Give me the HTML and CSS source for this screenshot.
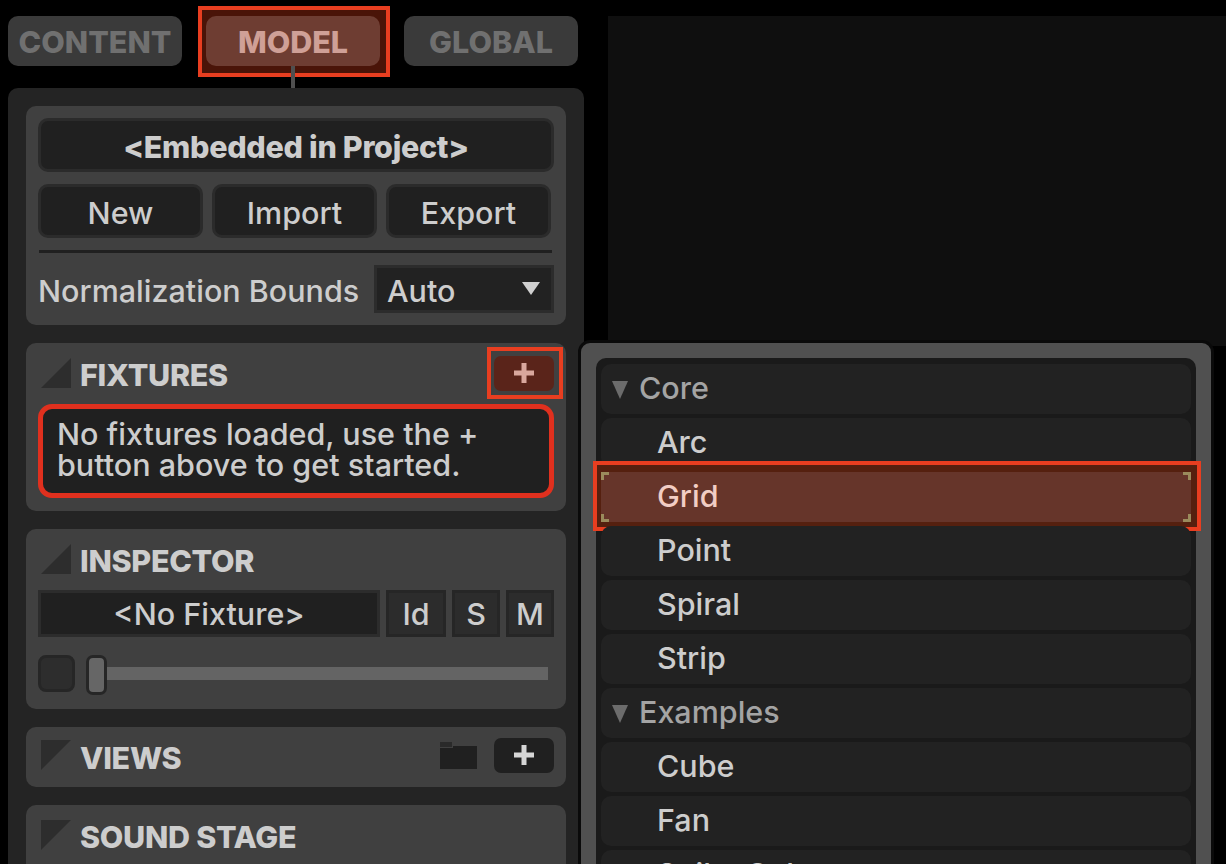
FILE: index.html
```html
<!DOCTYPE html>
<html lang="en">
<head>
<meta charset="utf-8">
<title>Model</title>
<link rel="stylesheet" href="styles.css">
</head>
<body>
<svg class="defs" width="0" height="0"><symbol id="cross" viewBox="0 0 22 22"><path d="M8.5 1h5v7.500H21v5h-7.500V21h-5v-7.500H1v-5h7.500Z"/></symbol></svg>
<div class="app">
  <aside class="side">
    <nav class="tabs">
      <div class="tab">CONTENT</div>
      <div class="tab-wrap">
        <span class="mark mark-tab"></span>
        <span class="stem"></span>
        <div class="tab tab-on">MODEL</div>
      </div>
      <div class="tab">GLOBAL</div>
    </nav>
    <div class="panel">
      <section class="card card-top">
        <div class="field field-bold">&lt;Embedded in Project&gt;</div>
        <div class="btn-row">
          <div class="btn">New</div>
          <div class="btn">Import</div>
          <div class="btn">Export</div>
        </div>
        <div class="rule"></div>
        <div class="norm">
          <span>Normalization Bounds</span>
          <div class="select"><span>Auto</span><i class="caret"></i></div>
        </div>
      </section>

      <section class="card card-fix">
        <header class="head">
          <svg class="tri" viewBox="0 0 30 30"><path d="M0 30 30 0V30Z"/></svg>
          <h2>FIXTURES</h2>
          <div class="plus plus-on"><svg class="cross"><use href="#cross"/></svg><span class="mark mark-plus"></span></div>
        </header>
        <div class="msg">No fixtures loaded, use the +<br>button above to get started.</div>
      </section>

      <section class="card card-insp">
        <header class="head">
          <svg class="tri" viewBox="0 0 30 30"><path d="M0 30 30 0V30Z"/></svg>
          <h2>INSPECTOR</h2>
        </header>
        <div class="insp-row">
          <div class="sq sq-name">&lt;No Fixture&gt;</div>
          <div class="sq sq-id">Id</div>
          <div class="sq sq-s">S</div>
          <div class="sq sq-m">M</div>
        </div>
        <div class="slider-row">
          <div class="check"></div>
          <div class="handle"></div>
          <div class="track"></div>
        </div>
      </section>

      <section class="card card-views">
        <header class="head">
          <svg class="tri" viewBox="0 0 30 30"><path d="M0 0H30L0 30Z"/></svg>
          <h2>VIEWS</h2>
          <svg class="folder" viewBox="0 0 37 27"><path class="folder-tab" d="M0 0H12V5H0Z"/><path d="M0 6H13V4H37V27H0Z"/></svg>
          <div class="plus"><svg class="cross"><use href="#cross"/></svg></div>
        </header>
      </section>

      <section class="card card-sound">
        <header class="head">
          <svg class="tri" viewBox="0 0 30 30"><path d="M0 0H30L0 30Z"/></svg>
          <h2>SOUND STAGE</h2>
        </header>
      </section>
    </div>
  </aside>
  <main class="stage"></main>
</div>

<div class="menu">
  <div class="list">
    <div class="item group"><i class="arrow"></i>Core</div>
    <div class="item">Arc</div>
    <div class="item-wrap">
      <span class="mark mark-grid"></span>
      <div class="item item-on">Grid<b class="cn tl"></b><b class="cn tr"></b><b class="cn bl"></b><b class="cn br"></b></div>
    </div>
    <div class="item">Point</div>
    <div class="item">Spiral</div>
    <div class="item">Strip</div>
    <div class="item group"><i class="arrow"></i>Examples</div>
    <div class="item">Cube</div>
    <div class="item">Fan</div>
    <div class="item">Spike Cube</div>
  </div>
</div>
</body>
</html>
```
FILE: styles.css
```css
* { box-sizing: border-box; }
html, body { margin: 0; height: 864px; overflow: hidden; background: #000; }
body { font-family: Inter, "Liberation Sans", sans-serif; font-size: 30.5px; font-weight: 500; color: #cdcdcd; position: relative; }
.defs { position: absolute; }

.app { display: flex; height: 864px; overflow: hidden; }
.side { width: 584px; margin-left: 8px; flex: none; padding-top: 16px; }
.stage { margin: 16px 0 0 16px; flex: 1; background: #0f0f0f; height: 330px; }

.tabs { display: flex; width: 570px; justify-content: space-between; height: 72px; }
.tab {
  width: 174px; height: 50px; border-radius: 10px; background: #3a3a3a; color: #707070;
  font-size: 30.5px; font-weight: 800; line-height: 51px; text-align: center; position: relative;
}
.tab-wrap { position: relative; width: 174px; height: 50px; }
.tab-on { background: #6e3d32; color: #cfa097; }

.mark { position: absolute; border: 4px solid #e83e20; pointer-events: none; }
.mark-tab { left: -8px; top: -10px; width: 192px; height: 71px; background: #4a1408; }
.stem { position: absolute; left: 85px; top: 50px; width: 4px; height: 22px; background: #4f4f4f; }

.panel {
  width: 576px; height: 900px; background: #242424; border-radius: 10px 10px 0 0;
  padding: 18px; display: flex; flex-direction: column; gap: 18px;
}
.card { background: #404040; border-radius: 10px; flex: none; }
.card-top { height: 219px; padding: 12px; }
.card-fix { height: 168px; padding: 15px 12px 0; }
.card-insp { height: 180px; padding: 15px 12px 0; }
.card-views { height: 60px; padding: 13px 12px 0; }
.card-sound { height: 80px; padding: 15px 12px 0; }

.field, .btn {
  background: #202020; border: 3px solid #2b2b2b; border-radius: 10px; display: flex;
  align-items: center; justify-content: center; padding-top: 2px;
}
.field { height: 54px; }
.field-bold { font-weight: 800; letter-spacing: -.3px; }
.btn-row { display: flex; gap: 9px; margin-top: 12px; }
.btn { width: 165px; height: 54px; }
.rule { height: 3px; background: #202020; margin: 12px 2px 12px 1px; }
.norm { display: flex; justify-content: space-between; align-items: center; height: 48px; padding-top: 2px; }
.select {
  width: 180px; height: 48px; margin-top: -2px; background: #222; border: 3px solid #2c2c2c; display: flex;
  align-items: center; justify-content: space-between; padding: 2px 11px 0 10px;
}
.caret { width: 0; height: 0; border-left: 9px solid transparent; border-right: 9px solid transparent; border-top: 13px solid #d0d0d0; margin-bottom: 4px; }

.head { display: flex; align-items: center; height: 30px; padding-left: 3px; position: relative; }
.head h2 { margin: 0 0 0 9px; padding-top: 4px; font-size: 30.5px; font-weight: 800; line-height: 30px; letter-spacing: -.3px; flex: 1; }
.card-views .head h2 { padding-top: 6px; }
.tri { width: 30px; height: 30px; fill: #2d2d2d; flex: none; }
.plus {
  width: 60px; height: 35px; background: #202020; border-radius: 7px; flex: none; position: relative;
  display: flex; align-items: center; justify-content: center;
}
.cross { width: 22px; height: 22px; fill: #d6d6d6; }
.plus-on { background: #5a241a; }
.plus-on .cross { fill: #d9a79d; }
.mark-plus { left: -7px; top: -9px; width: 76px; height: 52px; }
.folder { width: 37px; height: 27px; fill: #202020; margin-right: 17px; flex: none; }
.folder-tab { fill: #2a2a2a; }

.msg {
  margin-top: 16px; height: 94px; background: #202020; border: 5px solid #e0301e; border-radius: 14px;
  padding: 9px 14px; line-height: 31px;
}

.insp-row { display: flex; gap: 6px; margin-top: 16px; height: 47px; }
.sq { background: #2c2c2c; border: 3px solid #262626; display: flex; align-items: center; justify-content: center; }
.sq-name { width: 342px; background: #202020; border-color: #2c2c2c; }
.sq-id { width: 60px; }
.sq-s { width: 48px; }
.sq-m { width: 48px; }
.slider-row { display: flex; margin-top: 18px; align-items: center; height: 40px; }
.check { width: 37px; height: 37px; background: #2d2d2d; border: 3px solid #262626; border-radius: 8px; margin-top: -3px; }
.handle { width: 21px; height: 40px; background: #666; border: 3px solid #262626; border-radius: 7px; margin-left: 11px; }
.track { width: 441px; height: 13px; margin-top: -4px; background: #646464; }

.menu {
  position: absolute; left: 578px; top: 340px; width: 636px; height: 560px; background: #505050;
  border: 3px solid #0a0a0a; border-radius: 12px; padding: 15px;
}
.list { background: #1a1a1a; border-radius: 10px; padding: 6px 5px; display: flex; flex-direction: column; gap: 4px; height: 600px; }
.item {
  height: 50px; flex: none; background: #222; border-radius: 10px; padding-left: 56px; line-height: 48px;
  color: #cdcdcd; position: relative;
}
.group { padding-left: 38px; color: #a4a4a4; }
.arrow { position: absolute; left: 11px; top: 17px; width: 0; height: 0; border-left: 8px solid transparent; border-right: 8px solid transparent; border-top: 18px solid #6c6c6c; }
.item-wrap { position: relative; height: 50px; flex: none; }
.item-on { background: #66352a; color: #f2cdc4; border-radius: 0; }
.mark-grid { left: -8px; top: -11px; width: 608px; height: 70px; background: #55200f; }
.cn { position: absolute; width: 8px; height: 8px; border: 0 solid #9a8b5c; }
.tl { left: 0; top: 0; border-width: 3px 0 0 3px; }
.tr { right: 0; top: 0; border-width: 3px 3px 0 0; }
.bl { left: 0; bottom: 0; border-width: 0 0 3px 3px; }
.br { right: 0; bottom: 0; border-width: 0 3px 3px 0; }
```
